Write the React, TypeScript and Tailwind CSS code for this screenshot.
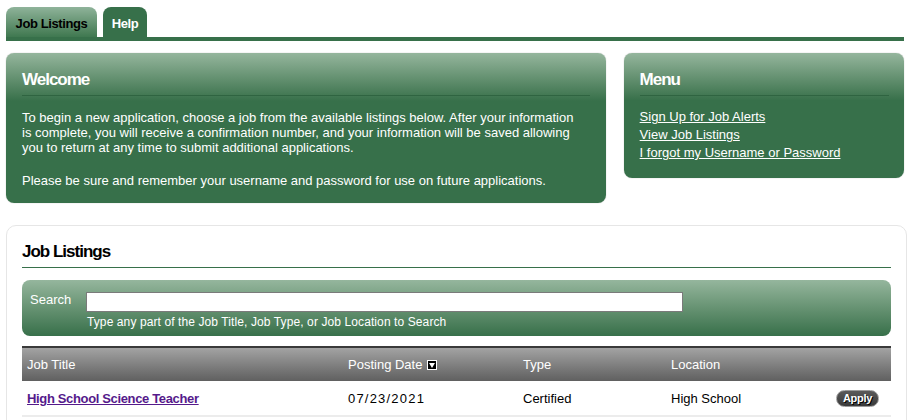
import React from "react";

const font = { fontFamily: '"Liberation Sans", Arial, sans-serif' };

export default function App() {
  return (
    <div className="w-[910px] h-[420px] overflow-hidden bg-white text-[13px]" style={font}>
      <div className="px-[6px] pt-[7px]">
        {/* Tabs */}
        <div className="flex gap-[6px] items-end">
          <div className="h-[30px] w-[91px] pt-[4px] rounded-t-[8px] bg-gradient-to-b from-[#8fb39a] to-[#3f7850] flex items-center justify-center font-bold text-[13px] text-black tracking-[-0.4px]">
            Job Listings
          </div>
          <div className="h-[30px] w-[44px] pt-[4px] rounded-t-[8px] bg-[#37704a] flex items-center justify-center font-bold text-[13px] text-white tracking-[-0.4px]">
            Help
          </div>
        </div>
        <div className="h-[4px] bg-[#37704a]" />

        {/* Top panels */}
        <div className="flex gap-[18px] mt-[12px] items-start">
          <div className="w-[601px] h-[150px] rounded-[8px] bg-gradient-to-b from-[#95b69d] via-[#37704a] via-[32%] to-[#37704a] shadow-[0_0_1px_rgba(0,0,0,0.4)] px-[16px] pt-[17px] text-white">
            <div className="font-bold text-[17px] tracking-[-1px] leading-[20px] pb-[5px] border-b border-[#2f6441]">Welcome</div>
            <div className="pt-[14px] leading-[15px] text-[13px] w-[558px]">
              <p>To begin a new application, choose a job from the available listings below. After your information is complete, you will receive a confirmation number, and your information will be saved allowing you to return at any time to submit additional applications.</p>
              <p className="mt-[18px]">Please be sure and remember your username and password for use on future applications.</p>
            </div>
          </div>
          <div className="w-[281px] h-[125px] rounded-[8px] bg-gradient-to-b from-[#95b69d] via-[#37704a] via-[38%] to-[#37704a] shadow-[0_0_1px_rgba(0,0,0,0.4)] pl-[16px] pr-[15px] pt-[17px] text-white">
            <div className="font-bold text-[17px] tracking-[-1px] leading-[20px] pb-[5px] border-b border-[#2f6441]">Menu</div>
            <div className="pt-[12px] leading-[18px] text-[13px] flex flex-col items-start">
              <a className="underline" href="#">Sign Up for Job Alerts</a>
              <a className="underline" href="#">View Job Listings</a>
              <a className="underline" href="#">I forgot my Username or Password</a>
            </div>
          </div>
        </div>

        {/* Job listings panel */}
        <div className="mt-[22px] w-[901px] h-[220px] rounded-[10px] border border-[#e6e6e6] px-[15px] pt-[16px]">
          <div className="font-bold text-[17px] tracking-[-1px] leading-[20px] pb-[5px] border-b border-[#37704a] text-black">Job Listings</div>
          <div className="mt-[12px] h-[56px] rounded-[8px] bg-gradient-to-b from-[#95b69d] to-[#37704a] flex items-start px-[8px] pt-[12px] text-white">
            <div className="w-[56px] text-[13px] leading-[16px] pt-[0px]">Search</div>
            <div className="flex flex-col">
              <input className="w-[597px] h-[20px] bg-white border border-[#7a7a7a] outline-none" />
              <div className="text-[12px] leading-[14px] mt-[3px] pl-[1px] tracking-[0.1px]">Type any part of the Job Title, Job Type, or Job Location to Search</div>
            </div>
          </div>
          <div className="mt-[10px] h-[35px] pt-[1px] border-t-2 border-[#3a3a3a] bg-gradient-to-b from-[#a3a3a3] to-[#606060] flex items-center text-white text-[13px]">
            <div className="w-[326px] pl-[5px]">Job Title</div>
            <div className="w-[175px] flex items-center gap-[5px]">
              Posting Date
              <span className="w-[10px] h-[10px] bg-black border border-white flex items-center justify-center">
                <svg width="6" height="5" viewBox="0 0 6 5"><path d="M0 0h6L3 5z" fill="#fff" /></svg>
              </span>
            </div>
            <div className="w-[148px]">Type</div>
            <div>Location</div>
          </div>
          <div className="h-[36px] pt-[2px] border-b-2 border-[#ececec] flex items-center text-[13px] text-black">
            <div className="w-[326px] pl-[5px]">
              <a href="#" className="font-bold underline text-[#551a8b] tracking-[-0.35px]">High School Science Teacher</a>
            </div>
            <div className="w-[175px] tracking-[1.2px]">07/23/2021</div>
            <div className="w-[148px]">Certified</div>
            <div className="flex-1">High School</div>
            <div className="mr-[12px] mb-[2px] h-[17px] px-[6px] rounded-full bg-gradient-to-b from-[#5a5a5a] to-[#3a3a3a] border border-[#9a9a9a] text-white font-bold text-[11px] leading-[15px] tracking-[-0.3px] [text-shadow:1px_1px_0_#000]">
              Apply
            </div>
          </div>
        </div>
      </div>
    </div>
  );
}
